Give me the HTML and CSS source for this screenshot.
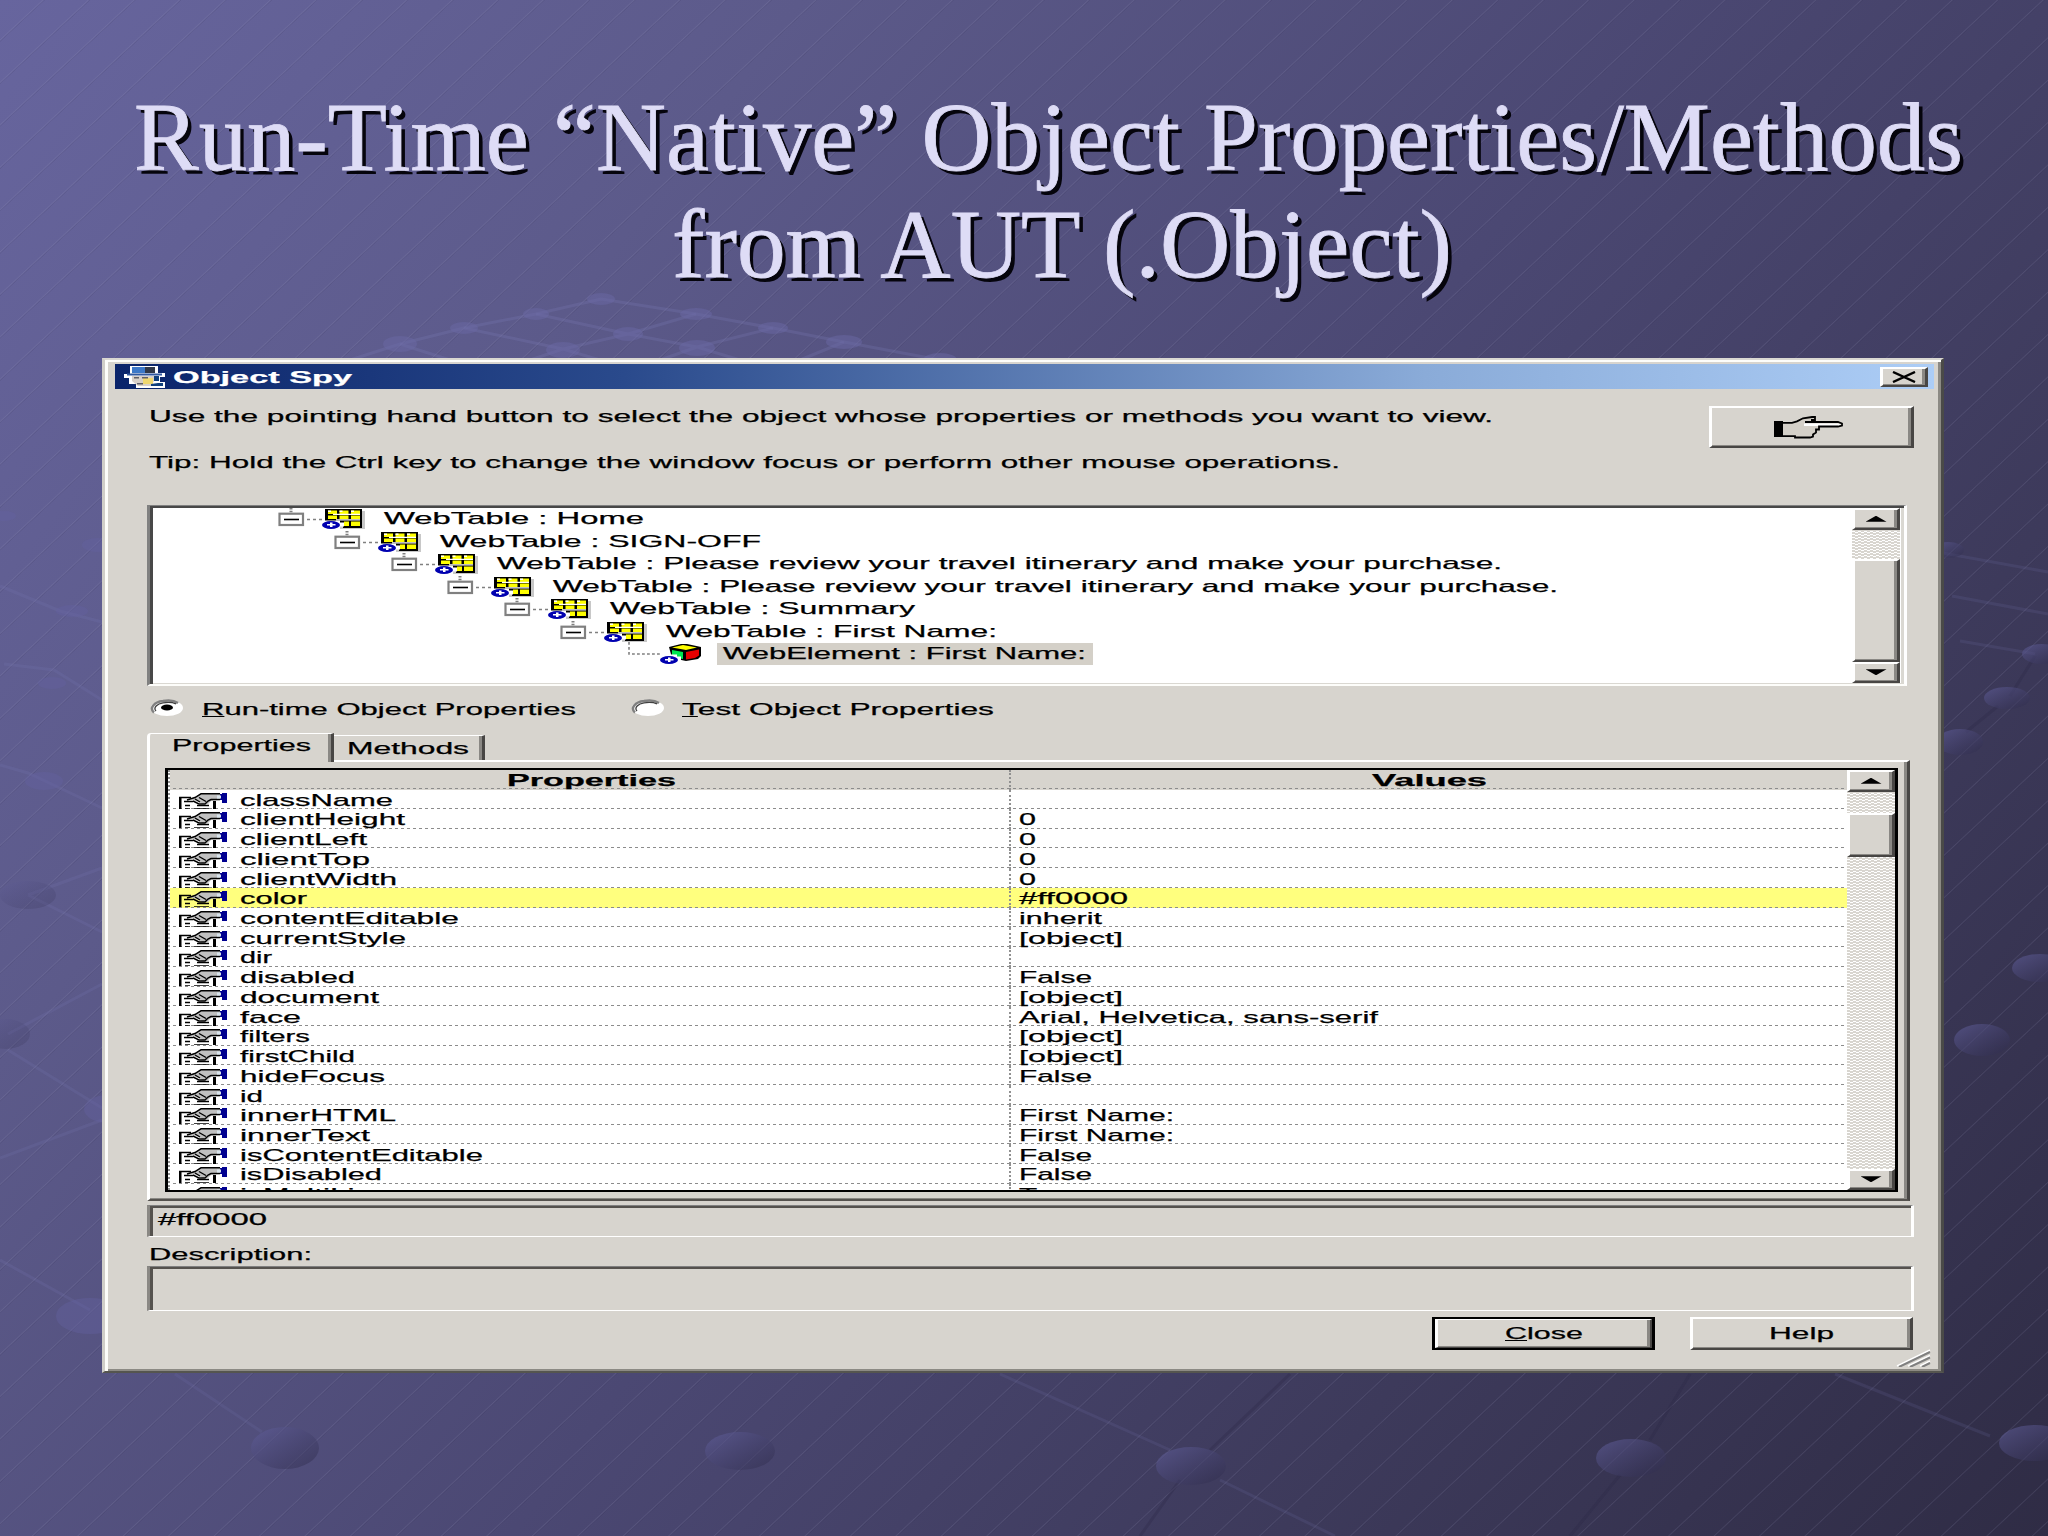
FILE: index.html
```html
<!DOCTYPE html>
<html>
<head>
<meta charset="utf-8">
<title>Object Spy</title>
<link rel="stylesheet" href="styles.css">
</head>
<body>

<svg width="0" height="0" class="defs">
  <defs>
    <linearGradient id="ball" x1="0" y1="0" x2="1" y2="1">
      <stop offset="0" stop-color="#6462a0" stop-opacity="0.6"/>
      <stop offset="1" stop-color="#2a2744" stop-opacity="0.45"/>
    </linearGradient>
    <symbol id="eye" viewBox="0 0 18 8" overflow="visible">
      <ellipse cx="9" cy="4" rx="9" ry="4" fill="#0000b0"/>
      <path d="M8 1.500h2.500v1.500h3v1.500h-3V6H8V4.500H5V3h3z" fill="#fff"/>
    </symbol>
    <symbol id="minus" viewBox="0 0 106 23" overflow="visible">
      <path d="M13 1v6" stroke="#808080" stroke-width="3" stroke-dasharray="1.4 1.4"/>
      <rect x="1.500" y="6.700" width="23.500" height="11.300" fill="#fff" stroke="#808080" stroke-width="2.200"/>
      <path d="M6 12.500h15" stroke="#000" stroke-width="1.600"/>
      <path d="M29 12.500h16" stroke="#808080" stroke-width="1.400" stroke-dasharray="3 3"/>
    </symbol>
    <symbol id="webtable" viewBox="0 0 106 23" overflow="visible">
      <use href="#minus" width="106" height="23"/>
      <path d="M50 4h37v18H62v-1H50z" fill="#c8c8c8"/>
      <path d="M47 2h37v19H65v-4H47z" fill="#000"/>
      <path d="M50 3.500h9v3.500h-9zM61.500 3.500h9v3.500h-9zM73 3.500h9v3.500h-9zM50 8.500h9V12h-9zM61.500 8.500h9V12h-9zM73 8.500h9V12h-9zM66 14.500h5v4.500h-5zM73 14.500h9V19h-9z" fill="#ff0"/>
      <path d="M50 3.500h3v1.500h-3zM61.500 3.500h3v1.500h-3zM73 3.500h3v1.500h-3zM55 6.800h27v1.200H55zM58 12.300h24v1.200H58z" fill="#fff"/>
      <path d="M44 13.500h18v2h4v4h-4v3H44z" fill="#fff"/>
      <use href="#eye" x="44" y="14" width="18" height="8"/>
    </symbol>
    <symbol id="webelement" viewBox="0 0 106 23" overflow="visible">
      <path d="M13 0v12h31" fill="none" stroke="#808080" stroke-width="1.600" stroke-dasharray="2.800 2.200"/>
      <path d="M53 5l12-3h6l14 3v9l-3 3-12 2-14-3z" fill="#000"/>
      <path d="M56 5.500l11-2.500 14 2.500-11 2.500z" fill="#ff0"/>
      <path d="M56 8l11 2v7l-11-2z" fill="#00e850"/>
      <path d="M70 10l13-2.500v6l-4 2.500-9 1.500z" fill="#e80000"/>
      <path d="M44 12.500h17v2h4v4h-4v3H44z" fill="#fff"/>
      <use href="#eye" x="44" y="14" width="18" height="8"/>
    </symbol>
    <symbol id="prop" viewBox="0 0 48 19" overflow="visible">
      <path d="M0 18V5.500h12M5 9.500h9M6 13.500h5M6 17h5M15 17h15M18 13.500h12" fill="none" stroke="#000" stroke-width="1.700"/>
      <path d="M1 5v13M35.500 9v9" stroke="#000" stroke-width="3"/>
      <path d="M11 7L22 2h19v6l-9 1-3 3h-6l-3-2z" fill="#c0c0c0"/>
      <path d="M8 8l8-2.500L22 1.800h19M41 7.500h-9l-3 1.500-3 3h-6l-6-3M16 7l5 3M20 5.500l7 4" fill="none" stroke="#000" stroke-width="1.400"/>
      <path d="M41 2h2V1h5v10h-5V8h-2z" fill="#000090"/>
      <path d="M38 3.500h4v3h-4z" fill="#d8e4ec"/>
    </symbol>
  </defs>
</svg>

<div class="slide">

  <svg class="net" width="2048" height="1536" viewBox="0 0 2048 1536">
    <g stroke="#7b7bb8" stroke-opacity="0.25" stroke-width="3" fill="none">
      <path d="M350 360L400 344 464 328 536 314 601 299 696 314 773 328 844 342 940 360"/>
      <path d="M400 344L450 360M464 328L563 349M536 314L628 334 697 347 740 360M563 349L628 334 696 314M697 347L773 328M530 360L563 349 600 360M800 360L844 342M660 360L697 347"/>
      <path d="M0 586L60 611 102 622M4 664L54 670 102 700M0 765L28 773 102 808M28 895L102 868M28 895L102 932M8 1034L102 984M8 1050L102 1108M0 1158L102 1120M0 1260L90 1310" stroke-opacity="0.18"/>
      <path d="M1943 553L2048 572M1952 596L2048 614M1960 641L2035 654" stroke-opacity="0.15"/>
      <path d="M175 1374L262 1432M1000 1374L1170 1450M1220 1480L1335 1536M1835 1374L1990 1436" stroke-opacity="0.15"/>
    </g>
    <g stroke="#2b2845" stroke-opacity="0.3" stroke-width="3">
      <path d="M2035 656L2010 696M1998 706L1966 732M1290 1374L1210 1450M1180 1480L1140 1536M1690 1374L1650 1440M1620 1475L1570 1536"/>
    </g>
    <g fill="#6967a4" fill-opacity="0.5">
      <ellipse cx="601" cy="299" rx="14" ry="6"/>
      <ellipse cx="536" cy="314" rx="13" ry="6"/>
      <ellipse cx="464" cy="328" rx="14" ry="6"/>
      <ellipse cx="400" cy="344" rx="17" ry="8"/>
      <ellipse cx="628" cy="334" rx="15" ry="7"/>
      <ellipse cx="563" cy="350" rx="17" ry="8"/>
      <ellipse cx="696" cy="314" rx="16" ry="6"/>
      <ellipse cx="773" cy="328" rx="15" ry="6"/>
      <ellipse cx="844" cy="342" rx="18" ry="7"/>
      <ellipse cx="697" cy="348" rx="18" ry="8"/>
      <ellipse cx="940" cy="360" rx="17" ry="7"/>
    </g>
    <g fill="url(#ball)">
      <ellipse cx="285" cy="1448" rx="34" ry="21"/>
      <ellipse cx="740" cy="1451" rx="35" ry="19"/>
      <ellipse cx="1191" cy="1466" rx="35" ry="19"/>
      <ellipse cx="1631" cy="1458" rx="35" ry="19"/>
      <ellipse cx="2035" cy="1443" rx="36" ry="18"/>
      <ellipse cx="2040" cy="968" rx="28" ry="14"/>
      <ellipse cx="1982" cy="1040" rx="28" ry="16"/>
      <ellipse cx="1960" cy="742" rx="23" ry="13"/>
      <ellipse cx="2007" cy="698" rx="23" ry="11"/>
      <ellipse cx="2042" cy="654" rx="20" ry="10"/>
      <ellipse cx="1948" cy="550" rx="16" ry="8"/>
    </g>
    <g fill="url(#ball)" opacity="0.45">
      <ellipse cx="28" cy="895" rx="28" ry="14"/>
      <ellipse cx="6" cy="1034" rx="24" ry="15"/>
    </g>
    <g fill="#6462a0" fill-opacity="0.4">
      <ellipse cx="108" cy="1109" rx="24" ry="14"/>
      <ellipse cx="90" cy="1316" rx="34" ry="18"/>
      <ellipse cx="44" cy="781" rx="19" ry="9"/>
      <ellipse cx="52" cy="683" rx="14" ry="6"/>
      <ellipse cx="72" cy="611" rx="16" ry="6"/>
      <ellipse cx="98" cy="545" rx="16" ry="7"/>
      <ellipse cx="4" cy="516" rx="12" ry="5"/>
    </g>
  </svg>

  <h1 class="title">
    <span class="line line1"><span class="fit" data-w="1829">Run-Time “Native” Object Properties/Methods</span></span>
    <span class="line line2"><span class="fit" data-w="780">from AUT (.Object)</span></span>
  </h1>

  <div class="window">
    <div class="titlebar">
      <svg class="spy" width="42" height="24" viewBox="0 0 42 24">
        <path d="M6 1h28v7h7v4h-5v5h5v6H12v-4H5v-6H0V9h6z" fill="#fff"/>
        <path d="M8 2h23v6H8z" fill="#3c78c8"/>
        <path d="M21 2h10v6H21z" fill="#303848"/>
        <path d="M3 8.500h35v2H3z" fill="#3058a0"/>
        <path d="M8 11h22v5l-3 5H14l-6-5z" fill="#d8d0c8"/>
        <path d="M19 13h10v6H19z" fill="#f0d870"/>
        <path d="M10 12h5v1.500h-5zM18 12h6v1.500h-6zM13 18h6v1.500h-6z" fill="#606068"/>
        <path d="M30 11h5v5h-5zM34 18h5v3H27v-2z" fill="#10407c"/>
      </svg>
      <span class="fit caption" data-w="179">Object Spy</span>
      <span class="close-x raised">
        <svg width="26" height="12" viewBox="0 0 26 12"><path d="M2 1L24 11M24 1L2 11" stroke="#000" stroke-width="2.400"/></svg>
      </span>
    </div>

    <div class="head">
      <div class="tips">
        <p><span class="fit" data-w="1344">Use the pointing hand button to select the object whose properties or methods you want to view.</span></p>
        <p><span class="fit" data-w="1191">Tip: Hold the Ctrl key to change the window focus or perform other mouse operations.</span></p>
      </div>
      <div class="hand raised">
        <svg width="70" height="23" viewBox="0 0 70 23">
          <path d="M9 7h9l8-4 12-2h3v3l-3 3h26l5 1v2l-5 1H47v3l-4 2-3 4-5 1H21l-3-1H9z" fill="#d4d0c8"/>
          <path d="M30 7.500h34l3 1-3 1.500H30z" fill="#fff"/>
          <path d="M9 6.800h9l5-1.500 6-3L38 1h3v3h-4M31 6h33l4 1.500v2L64 10.500H45v3h-3v3l-3 2v2l-3 1H21v-1.300H9" fill="none" stroke="#000" stroke-width="1.800"/>
          <path d="M0 5h9v16H0z" fill="#000"/>
        </svg>
      </div>
    </div>

    <div class="tree">
      <div class="nodes" id="nodes"></div>
      <div class="scroll">
        <span class="arrow raised"><i class="up"></i></span>
        <span class="thumb raised tree-thumb"></span>
        <span class="arrow raised"><i class="down"></i></span>
      </div>
    </div>

    <div class="radios">
      <svg width="36" height="18" viewBox="0 0 36 18">
        <ellipse cx="18" cy="9" rx="16" ry="8" fill="#fff"/>
        <path d="M5 13.500C0 9 5 3 14 2C20 1 26 2 29 4" fill="none" stroke="#808080" stroke-width="2.400"/>
        <path d="M7 12C4 9 8 4.500 14 3.800C20 3 24 3.500 27 4.800" fill="none" stroke="#404040" stroke-width="1.300"/>
        <ellipse cx="18" cy="8.500" rx="6" ry="3" fill="#000"/>
      </svg>
      <span class="label1"><span class="fit" data-w="374"><u>R</u>un-time Object Properties</span></span>
      <svg width="36" height="18" viewBox="0 0 36 18">
        <ellipse cx="18" cy="9" rx="16" ry="8" fill="#fff"/>
        <path d="M5 13.500C0 9 5 3 14 2C20 1 26 2 29 4" fill="none" stroke="#808080" stroke-width="2.400"/>
        <path d="M7 12C4 9 8 4.500 14 3.800C20 3 24 3.500 27 4.800" fill="none" stroke="#404040" stroke-width="1.300"/>
      </svg>
      <span class="label2"><span class="fit" data-w="312"><u>T</u>est Object Properties</span></span>
    </div>

    <div class="tabs">
      <div class="tab active"><span class="fit" data-w="139">Properties</span></div>
      <div class="tab second"><span class="fit" data-w="122">Methods</span></div>
    </div>
    <div class="pane">
      <div class="list">
        <div class="grid">
          <div class="row header">
            <div class="name"><span class="fit" data-w="169">Properties</span></div>
            <div class="value"><span class="fit" data-w="115">Values</span></div>
          </div>
          <div id="rows"></div>
        </div>
        <div class="scroll">
          <span class="arrow raised"><i class="up"></i></span>
          <span class="thumb raised list-thumb"></span>
          <span class="arrow raised last"><i class="down"></i></span>
        </div>
      </div>
    </div>

    <div class="field current"><span class="fit" data-w="109">#ff0000</span></div>
    <div class="desc-label"><span class="fit" data-w="163">Description:</span></div>
    <div class="field desc"></div>

    <div class="buttons">
      <div class="button default"><span class="raised"><span class="fit" data-w="78"><u>C</u>lose</span></span></div>
      <div class="button raised"><span class="fit" data-w="65">Help</span></div>
    </div>
    <svg class="grip" width="35" height="18" viewBox="0 0 35 18">
      <path d="M1 17L34 1M12 17L34 6.500M24 17L34 12" stroke="#fff" stroke-width="1.500"/>
      <path d="M3 18L34 3M14 18L34 8.500M26 18L34 14" stroke="#808080" stroke-width="2"/>
    </svg>
  </div>
</div>

<script src="script.js"></script>
</body>
</html>
```
FILE: styles.css
```css
* {
  box-sizing: border-box;
}

body {
  margin: 0;
  font-family: "Liberation Sans", Arial, sans-serif;
  font-size: 17px;
  line-height: 20px;
  color: #000;
}

.defs {
  position: absolute;
}

.slide {
  position: relative;
  width: 2048px;
  height: 1536px;
  overflow: hidden;
  padding-top: 84px;
  background:
    repeating-linear-gradient(137deg, rgba(160,160,200,0) 0, rgba(160,160,200,0) 28.5px, rgba(165,165,200,.14) 29.3px, rgba(30,25,60,.1) 30.5px, rgba(160,160,200,0) 31px),
    linear-gradient(127deg, #67659e 0%, #5c5a8a 25%, #4b4873 52%, #3d3a5b 76%, #2f2c45 100%);
}

.net {
  position: absolute;
  left: 0;
  top: 0;
}

.fit {
  display: inline-block;
  white-space: nowrap;
  transform-origin: 0 50%;
}

.window .fit {
  translate: 0 1px;
  -webkit-text-stroke: .25px;
}

.title {
  position: relative;
  margin: 0;
  height: 274px;
  font-family: "Liberation Serif", "Times New Roman", serif;
  font-size: 98px;
  font-weight: normal;
  line-height: 107px;
  color: #dedcf6;
  text-shadow: 4px 4px 0 #05040c;
  -webkit-text-stroke: .8px #dedcf6;
}

.line {
  display: block;
}

.line1 {
  padding-left: 134px;
}

.line2 {
  padding-left: 672px;
}

.window {
  position: relative;
  width: 1842px;
  height: 1015px;
  margin-left: 102px;
  padding: 4px 7px 0 10px;
  background: #d7d4ce;
  border-style: solid;
  border-width: 2px 3px 2px 3px;
  border-color: #dad8d2 #4a4a48 #55554f #d0cec8;
  box-shadow: inset 3px 2px #fdfdfa, inset -3px -2px #8c8a84;
}

.raised {
  border-style: solid;
  border-width: 2px 3px 2px 3px;
  border-color: #fff #484644 #484644 #fff;
  box-shadow: inset -3px -1px #8a8884;
  background: #d7d4ce;
}

.titlebar {
  display: flex;
  align-items: center;
  height: 25px;
  padding: 0 6px 0 9px;
  background: linear-gradient(to right, #0a246a, #2a4a8c 28%, #8aabd8 72%, #accdf6);
}

.spy {
  margin-right: 7px;
}

.caption {
  color: #fff;
  font-weight: bold;
}

.close-x {
  display: flex;
  align-items: center;
  justify-content: center;
  width: 48px;
  height: 20px;
  margin-left: auto;
}

.head {
  display: flex;
  justify-content: space-between;
  height: 116px;
  padding: 17px 20px 0 34px;
}

.head p {
  margin: 0 0 26px;
}

.hand {
  display: flex;
  align-items: center;
  justify-content: center;
  width: 205px;
  height: 42px;
  padding-right: 5px;
}

.tree {
  display: flex;
  width: 1760px;
  height: 181px;
  margin-left: 32px;
  padding: 2px 4px 1px 3px;
  background: #fff;
  border-style: solid;
  border-width: 1px 3px 2px 3px;
  border-color: #808080 #fff #fdfdfa #808080;
  box-shadow: inset 3px 2px #484848, inset -3px -1px #dad8d2;
}

.nodes {
  flex: 1;
  overflow: hidden;
}

.node {
  display: flex;
  height: 22.57px;
  line-height: 22px;
}

.node:first-child {
  margin-top: -1px;
}

.node svg {
  flex: none;
}

.selected {
  height: 22px;
  margin: 1px 0 0 -5px;
  padding: 0 7px 0 6px;
  background: #d4d0c8;
  line-height: 20px;
}

.scroll {
  display: flex;
  flex-direction: column;
  width: 48px;
  background: repeating-conic-gradient(#fff 0 25%, #d8d5cf 0 50%) 0 0 / 6px 3px;
}

.arrow {
  display: flex;
  align-items: center;
  justify-content: center;
  height: 21.500px;
  flex: none;
}

.thumb {
  flex: none;
}

.tree-thumb {
  height: 103px;
  margin-top: 29px;
}

.list-thumb {
  height: 44px;
  margin-top: 21px;
}

.last {
  margin-top: auto;
}

.up, .down {
  width: 21px;
  height: 6px;
  background: #000;
}

.up {
  clip-path: polygon(50% 0, 100% 100%, 0 100%);
}

.down {
  clip-path: polygon(0 0, 100% 0, 50% 100%);
}

.radios {
  display: flex;
  height: 47px;
  padding: 13px 0 0 34px;
}

.label1 {
  width: 445px;
  flex: none;
  padding-left: 17px;
}

.label2 {
  padding-left: 16px;
}

.tabs {
  display: flex;
  align-items: flex-end;
  height: 27px;
  padding-left: 32px;
}

.tab {
  border-style: solid;
  border-color: #fff #484644 transparent #fff;
  border-width: 1.500px 3px 0 3px;
  box-shadow: inset -3px 0 #8a8884;
}

.active {
  position: relative;
  z-index: 1;
  width: 187px;
  height: 29px;
  margin-bottom: -2px;
  padding: 1px 0 0 22px;
  background: #d7d4ce;
  border-radius: 4px 0 0 0;
}

.second {
  width: 151px;
  height: 25px;
  padding: 2px 0 0 13px;
  border-left: 0;
}

.pane {
  width: 1763px;
  height: 441px;
  margin-left: 32px;
  padding: 6px 9px 0 15px;
  border-style: solid;
  border-width: 2px 3px 2px 3px;
  border-color: #fff #484644 #55524e #fff;
  box-shadow: inset -3px -1px #8a8884;
}

.list {
  display: flex;
  width: 1733px;
  height: 424px;
  border: solid #000;
  border-width: 2px 3px;
  background: #fff;
}

.grid {
  flex: 1;
  overflow: hidden;
  border-left: 2px dotted #909090;
}

.row {
  display: flex;
  height: 19.730px;
  line-height: 19.730px;
  background: repeating-linear-gradient(to right, #8c8c8c 0 3px, transparent 3px 6px) 3px 100% / 100% 1.400px no-repeat;
}

.header {
  background-color: #d7d4ce;
  font-weight: bold;
  text-align: center;
}

.name {
  flex: none;
  width: 841px;
  border-right: 2px dotted #909090;
}

.value {
  padding-left: 8px;
}

.header .name {
  padding-left: 3px;
}

.header .value {
  flex: 1;
  padding-left: 0;
}

.name svg {
  float: left;
  margin: 2px 13px 0 9px;
}

.hot {
  background-color: #ffff7e;
}

.field {
  width: 1767px;
  margin-left: 32px;
  border-style: solid;
  border-width: 1px 3px 1.500px 3px;
  border-color: #808080 #fff #fff #8a8884;
  box-shadow: inset 3px 2px #55524e;
}

.current {
  height: 32px;
  margin-top: 4px;
  padding: 3px 0 0 8px;
}

.desc-label {
  height: 29px;
  padding: 7px 0 0 34px;
}

.desc {
  height: 45px;
}

.buttons {
  display: flex;
  justify-content: flex-end;
  gap: 35px;
  margin-top: 6px;
  padding-right: 21px;
}

.button {
  display: flex;
  justify-content: center;
  width: 223px;
  height: 33px;
  padding-top: 4px;
}

.default {
  border: solid #000;
  border-width: 2px 3px;
  padding: 0;
}

.default .raised {
  flex: 1;
  padding-top: 3px;
  border-width: 1px 2px 1px 3px;
  text-align: center;
}

.grip {
  position: absolute;
  right: 10px;
  bottom: 4px;
}
```
FILE: script.js
```javascript
// [level, icon, text, width]
const nodes = [
  [0, "webtable", "WebTable : Home", 260],
  [1, "webtable", "WebTable : SIGN-OFF", 321],
  [2, "webtable", "WebTable : Please review your travel itinerary and make your purchase.", 1005],
  [3, "webtable", "WebTable : Please review your travel itinerary and make your purchase.", 1005],
  [4, "webtable", "WebTable : Summary", 305],
  [5, "webtable", "WebTable : First Name:", 331],
  [6, "webelement", "WebElement : First Name:", 363]
];

// [name, width, value, width]
const rows = [
  ["className", 153, "", 0],
  ["clientHeight", 165, "0", 17],
  ["clientLeft", 127, "0", 17],
  ["clientTop", 130, "0", 17],
  ["clientWidth", 157, "0", 17],
  ["color", 67, "#ff0000", 109],
  ["contentEditable", 219, "inherit", 83],
  ["currentStyle", 166, "[object]", 104],
  ["dir", 32, "", 0],
  ["disabled", 115, "False", 73],
  ["document", 139, "[object]", 104],
  ["face", 61, "Arial, Helvetica, sans-serif", 359],
  ["filters", 70, "[object]", 104],
  ["firstChild", 115, "[object]", 104],
  ["hideFocus", 145, "False", 73],
  ["id", 23, "", 0],
  ["innerHTML", 156, "First Name:", 155],
  ["innerText", 130, "First Name:", 155],
  ["isContentEditable", 243, "False", 73],
  ["isDisabled", 142, "False", 73],
  ["isMultiLine", 150, "True", 60]
];

document.getElementById("nodes").innerHTML = nodes.map(n => `
  <div class="node" style="padding-left:${125 + n[0] * 56.4}px">
    <svg width="106" height="23"><use href="#${n[1]}" width="106" height="23"/></svg>
    <span class="${n[1] === "webelement" ? "selected" : ""}"><span class="fit" data-w="${n[3]}">${n[2]}</span></span>
  </div>`).join("");

document.getElementById("rows").innerHTML = rows.map(r => `
  <div class="row ${r[0] === "color" ? "hot" : ""}">
    <div class="name"><svg width="48" height="17"><use href="#prop" width="48" height="19"/></svg><span class="fit" data-w="${r[1]}">${r[0]}</span></div>
    <div class="value">${r[2] ? `<span class="fit" data-w="${r[3]}">${r[2]}</span>` : ""}</div>
  </div>`).join("");

// stretch every label to its width
document.querySelectorAll(".fit").forEach(el => {
  const w = el.getBoundingClientRect().width;
  el.style.marginRight = (el.dataset.w - w) + "px";
  el.style.transform = "scaleX(" + el.dataset.w / w + ")";
});
```
